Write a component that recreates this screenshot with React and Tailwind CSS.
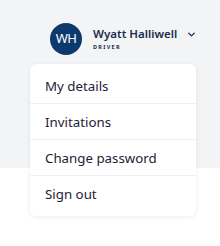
import { ChevronDown } from 'lucide-react';

const items = ['My details', 'Invitations', 'Change password', 'Sign out'];

export default function App() {
  return (
    <div className="relative w-[220px] h-[246px] bg-white overflow-hidden" style={{ fontFamily: '"Noto Sans", Lato, sans-serif' }}>
      <div className="h-[168px] bg-[#f3f4f6]">
        <div className="flex items-center pl-[50px] pt-[23px]">
          <div className="w-8 h-8 rounded-full bg-[#0d3a6e] text-white flex items-center justify-center text-[13px] tracking-[-0.5px]">
            WH
          </div>
          <div className="ml-[11px] flex flex-col">
            <span className="text-[11.5px] font-semibold leading-[14px] text-[#1c2c4c]">Wyatt Halliwell</span>
            <span className="mt-[3px] text-[5.5px] font-bold tracking-[1.3px] leading-[7px] text-[#1c2c4c]">DRIVER</span>
          </div>
          <ChevronDown className="ml-[9px] mb-[9px] w-[11px] h-[11px] text-[#1c2c4c]" strokeWidth={3} />
        </div>
      </div>

      {/* dropdown menu */}
      <div className="absolute left-[30px] top-[64px] w-[166px] py-1 bg-white rounded-[6px] shadow-[0_1px_4px_rgba(0,0,0,0.08)]">
        {items.map((item, i) => (
          <div
            key={item}
            className={`h-9 flex items-center px-[15px] pt-[2px] text-[13.3px] text-[#1d2235] ${i < items.length - 1 ? 'border-b border-[#f0f1f3]' : ''}`}
          >
            {item}
          </div>
        ))}
      </div>
    </div>
  );
}
